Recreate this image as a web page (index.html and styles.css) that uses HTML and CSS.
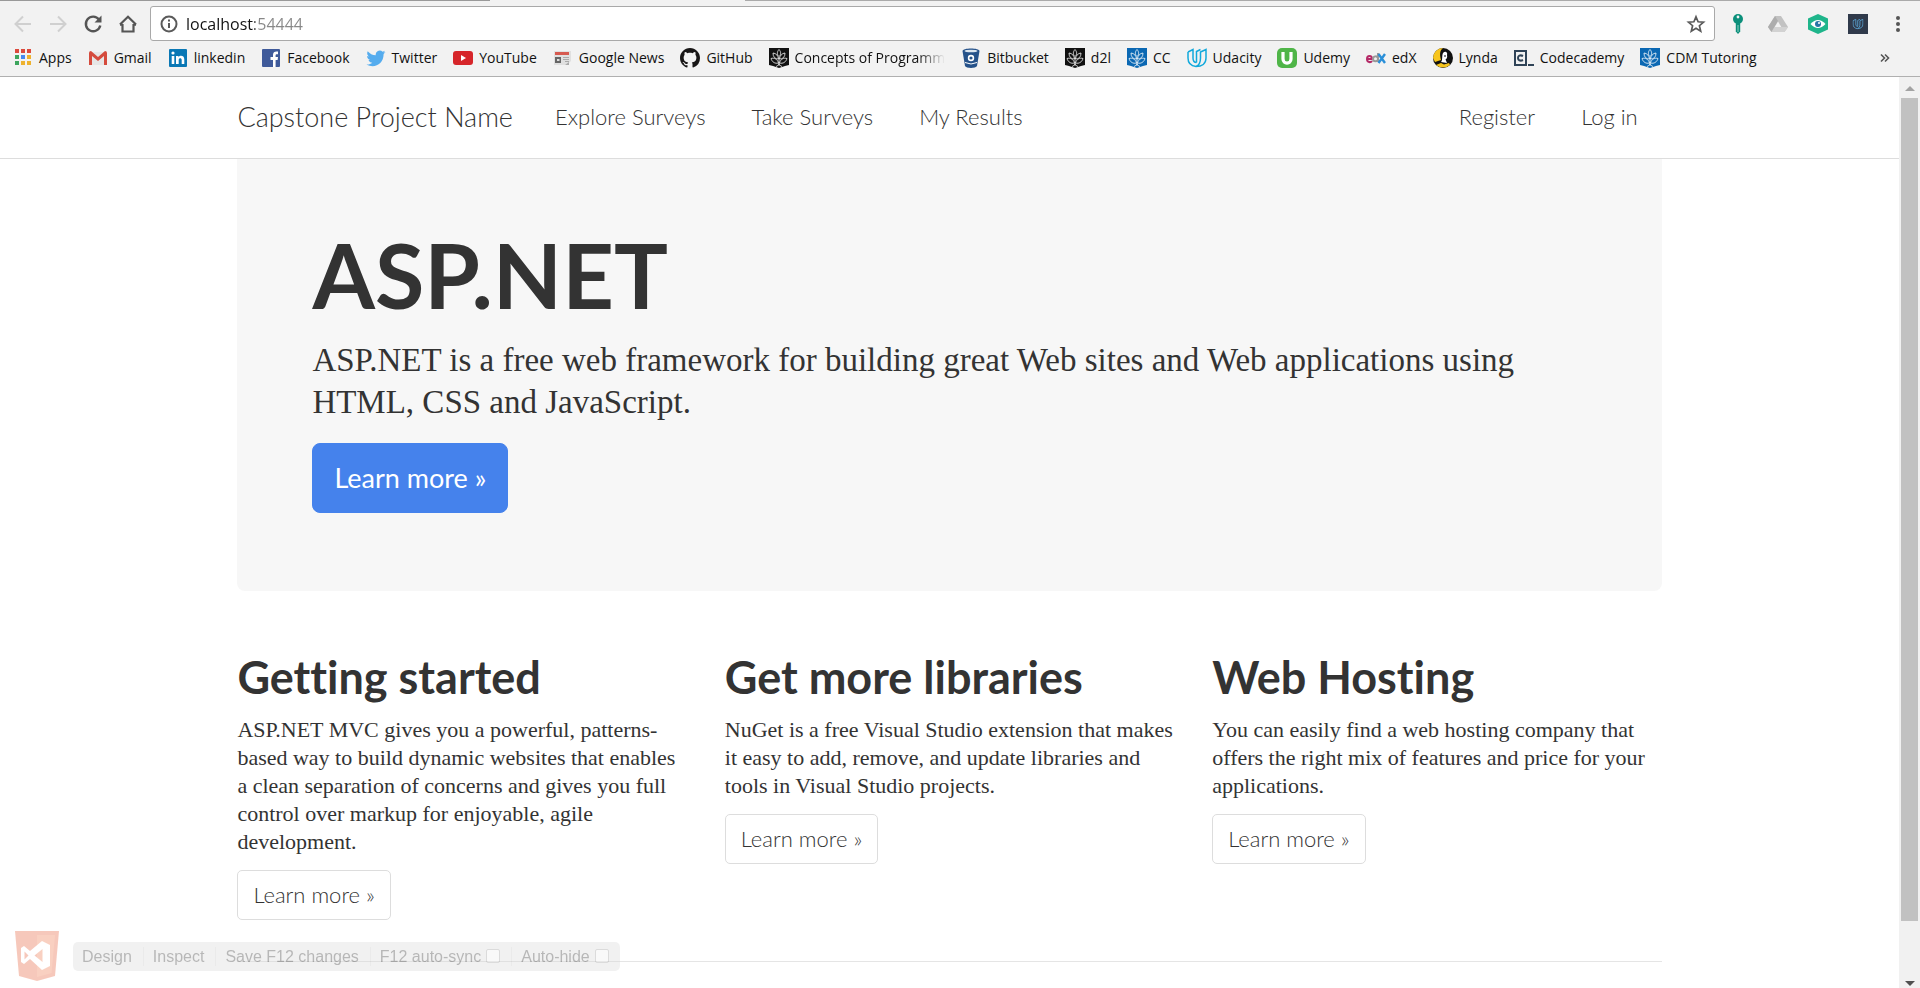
FILE: index.html
```html
<!DOCTYPE html>
<html lang="en">
<head>
<meta charset="utf-8">
<title>Home Page</title>
<link rel="stylesheet" href="styles.css">
</head>
<body>
<svg class="defs" aria-hidden="true">
  <symbol id="tree" viewBox="0 0 20 20">
    <path d="M0 0h20v17l-4 1-6 2-6-2-4-1z"/>
    <g fill="none" stroke="#fff" stroke-width=".9" stroke-opacity=".85" stroke-linejoin="round">
      <path d="M10 9v9M7 18.500c1.500-.5 2.500-1.500 3-3 .5 1.500 1.500 2.500 3 3"/>
      <path d="M10 1.500c-2.200 2.500-2.200 5 0 7 2.200-2 2.200-4.500 0-7zM9.500 11C6 11 4 9 4 5c3 .3 5.200 2.500 5.500 6zM10.500 11c3.500 0 5.500-2 5.500-6-3 .3-5.200 2.500-5.500 6zM9.500 15C6 16 3 14 2 10.500c3-1 6.500.5 7.500 4.500zM10.500 15c3.500 1 6.500-1 7.500-4.500-3-1-6.500.5-7.500 4.500z"/>
    </g>
  </symbol>
  <symbol id="udacity" viewBox="0 0 20 20">
    <path d="M1 4l5-2.500V10c0 3 1 4.500 3.500 4.500M1 4v6c0 5 3 8 8 8.500 6 0 10-3 10-8.500V1.500L13.500 4v6c0 4.500-1.500 7.500-4.500 8.500M9.500 14.500V3.500l4-2"/>
  </symbol>
</svg>
<header class="chrome">
  <div class="tabline"><i></i><b></b></div>
  <div class="toolbar">
    <button class="tool" aria-label="Back"><svg viewBox="0 0 20 20" fill="none" stroke="#d0d0d0" stroke-width="2"><path d="M18 10H3M10 2.500L2.500 10l7.500 7.500"/></svg></button>
    <button class="tool" aria-label="Forward"><svg viewBox="0 0 20 20" fill="none" stroke="#d0d0d0" stroke-width="2"><path d="M2 10h15M10 2.500l7.500 7.500-7.500 7.500"/></svg></button>
    <button class="tool" aria-label="Reload"><svg viewBox="0 0 20 20" fill="none" stroke="#555" stroke-width="2.400"><path d="M16 5.500A7.300 7.300 0 1 0 17.300 11.500"/><path d="M18.500 1.500v7h-7z" fill="#555" stroke="none"/></svg></button>
    <button class="tool" aria-label="Home"><svg viewBox="0 0 20 20" fill="none" stroke="#555" stroke-width="2.200"><path d="M4.500 10v7.500h11V10M2 10.700h2.500M18 10.700h-2.500M2 10.500l8-7.800 8 7.800"/></svg></button>
    <div class="address">
      <svg class="info" viewBox="0 0 20 20" fill="none" stroke="#5a5a5a" stroke-width="2"><circle cx="10" cy="10" r="7.500"/><path d="M10 9v5M10 5.500v2"/></svg>
      <input class="url" type="text" aria-label="Address" value="localhost:54444">
      <button class="star" aria-label="Bookmark this page"><svg viewBox="0 0 20 20" fill="none" stroke="#5a5a5a" stroke-width="1.700"><path d="M10 2.800l2.100 5 5.400.4-4.100 3.500 1.300 5.400-4.700-2.900-4.700 2.900 1.300-5.400-4.100-3.500 5.400-.4z"/></svg></button>
    </div>
    <div class="extensions">
      <button class="tool" aria-label="Password key"><svg viewBox="0 0 20 20"><circle cx="10" cy="5" r="5" fill="#0b8f7a"/><circle cx="10" cy="3" r="1.400" fill="#f2f2f2"/><path d="M7.800 9h4.400v8.500L10 20l-2.200-2.500z" fill="#0b8f7a"/><path d="M10 11v7" stroke="#8fd0c4"/></svg></button>
      <button class="tool" aria-label="Drive"><svg viewBox="0 0 20 20"><path d="M7 2h6l7 11-3.500 5h-13L0 13z" fill="#c2c2c2"/><path d="M7 2L0 13l3.500 5L10 7z" fill="#adadad"/><path d="M3.500 18l3-5H20l-3.500 5z" fill="#d2d2d2"/><path d="M10 7.500l3.300 5.500H6.700z" fill="#f2f2f2"/></svg></button>
      <button class="tool" aria-label="Privacy eye"><svg viewBox="0 0 20 20"><path d="M10 0l10 4.500v11L10 20 0 15.500v-11z" fill="#1fb58b"/><path d="M2.500 10q7.500-8 15 0-7.500 8-15 0z" fill="#fff"/><circle cx="10" cy="10" r="3" fill="#2874a6"/><circle cx="11" cy="9" r="1" fill="#fff"/></svg></button>
      <button class="tool" aria-label="Udacity"><svg viewBox="0 0 20 20"><path d="M0 0h20v20H0z" fill="#303a4b"/><use href="#udacity" x="4.500" y="4.500" width="11" height="11" fill="none" stroke="#5aa0cf" stroke-width="1.600"/></svg></button>
      <button class="tool" aria-label="Menu"><svg viewBox="0 0 20 20" fill="#555"><circle cx="10" cy="4" r="2"/><circle cx="10" cy="10" r="2"/><circle cx="10" cy="16" r="2"/></svg></button>
    </div>
  </div>
  <nav class="bookmarks" aria-label="Bookmarks">
    <a href="#"><svg viewBox="0 0 20 20"><path d="M2 1h4v4H2zM8 1h4v4H8zM14 1h4v4h-4z" fill="#dc4a3d"/><path d="M2 7h4v4H2zM2 13h4v4H2z" fill="#3da55d"/><path d="M8 7h4v4H8z" fill="#4688f1"/><path d="M14 7h4v4h-4zM8 13h4v4H8zM14 13h4v4h-4z" fill="#eeb22f"/></svg>Apps</a>
    <a href="#"><svg viewBox="0 0 20 20"><path d="M2 4h16v13H2z" fill="#e6e6e6"/><path d="M1 17V5q0-2 2-2l7 6 7-6q2 0 2 2v12h-3V8l-6 5-6-5v9z" fill="#d54b3d"/></svg>Gmail</a>
    <a href="#"><svg viewBox="0 0 20 20"><rect x="1" y="1" width="18" height="18" rx="1" fill="#0a78b5"/><g fill="#fff"><circle cx="5" cy="5" r="1.600"/><path d="M3.700 8h2.600v8H3.700zM8 8h2.500v1.200C12 7 16.300 7.300 16.300 11.500V16h-2.600v-4c0-2.500-3-2.500-3 0v4H8z"/></g></svg>linkedin</a>
    <a href="#"><svg viewBox="0 0 20 20"><rect x="1" y="1" width="18" height="18" rx="1" fill="#3f5a9a"/><path d="M12 19v-7H9.500V9H12V7c0-3 2-4 5-3.500v2.700c-2-.2-2.400.2-2.400 1.300V9H17l-.4 3h-2v7z" fill="#fff"/></svg>Facebook</a>
    <a href="#"><svg viewBox="0 0 20 20"><path d="M19.500 4l-2 .8 1.500-2-2.400.9a4 4 0 0 0-6.800 3.600C6.500 7.200 3.700 5.500 1.700 3.200c-1 2-.4 4 1.200 5.300L1.100 8c0 2 1.300 3.500 3.200 4H2.500c.6 1.600 2 2.700 3.800 2.800C4.500 16.200 2.500 16.800.5 16.500c8 4.500 17.300-.5 17.100-10.500z" fill="#55acee"/></svg>Twitter</a>
    <a href="#"><svg viewBox="0 0 20 20"><rect y="3" width="20" height="14" rx="3" fill="#d6252a"/><path d="M8 7l5 3-5 3z" fill="#fff"/></svg>YouTube</a>
    <a href="#"><svg viewBox="0 0 20 20"><path d="M1 3h17v10l-4 4H1z" fill="#e0e0e0"/><path d="M2 4h14v3H2z" fill="#d65a50"/><path d="M2 9h6v6H2z" fill="#666"/><path d="M4 11h2.500v2H4z" fill="#ddd"/><path d="M10 9h6v1h-6zM10 11h6v1h-6zM12 13h4v1h-4zM12 17l4-3v3z" fill="#aaa"/></svg>Google News</a>
    <a href="#"><svg viewBox="0 0 16 16"><path fill="#181616" d="M8 0C3.580 0 0 3.580 0 8c0 3.540 2.290 6.530 5.470 7.590.4.070.55-.17.55-.38 0-.19-.01-.82-.01-1.490-2.010.37-2.530-.49-2.690-.94-.09-.23-.48-.94-.82-1.130-.28-.15-.68-.52-.01-.53.63-.01 1.080.58 1.230.82.72 1.210 1.870.87 2.330.66.070-.52.28-.87.51-1.070-1.780-.2-3.640-.89-3.640-3.950 0-.87.31-1.590.82-2.150-.08-.2-.36-1.020.08-2.120 0 0 .67-.21 2.200.82.64-.18 1.320-.27 2-.27s1.360.09 2 .27c1.530-1.040 2.200-.82 2.200-.82.44 1.100.16 1.920.08 2.120.51.56.82 1.270.82 2.150 0 3.070-1.870 3.750-3.650 3.950.29.25.54.73.54 1.480 0 1.070-.01 1.930-.01 2.200 0 .21.15.46.55.38A8.010 8.010 0 0 0 16 8c0-4.420-3.580-8-8-8z"/></svg>GitHub</a>
    <a href="#"><svg fill="#111"><use href="#tree"/></svg><span class="fade">Concepts of Programm</span></a>
    <a href="#"><svg viewBox="0 0 20 20"><path d="M1.500 3c0-3.500 17-3.500 17 0L16 18c-1 2.500-11 2.500-12 0z" fill="#25528a"/><ellipse cx="10" cy="3" rx="6.500" ry="1.300" fill="#dbe5ef"/><circle cx="10" cy="10" r="2.400" fill="none" stroke="#fff" stroke-width="1.600"/><path d="M4 14.500q6 3 12 0" fill="none" stroke="#fff"/></svg>Bitbucket</a>
    <a href="#"><svg fill="#111"><use href="#tree"/></svg>d2l</a>
    <a href="#"><svg fill="#0b68b3"><use href="#tree"/></svg>CC</a>
    <a href="#"><svg fill="none" stroke="#12a9dc" stroke-width="1.500"><use href="#udacity"/></svg>Udacity</a>
    <a href="#"><svg viewBox="0 0 20 20"><rect width="20" height="20" rx="5" fill="#4fb548"/><path d="M6 4v7c0 5.500 8 5.500 8 0V4" fill="none" stroke="#fff" stroke-width="3.200"/></svg>Udemy</a>
    <a href="#"><svg viewBox="0 0 20 20" fill="none" stroke-width="2"><path d="M1 11h5c0-4-5-4-5 0s4 3.500 5 2" stroke="#b52a67"/><path d="M12 5v9M12 11c0-4-5-3-5 0s5 3 5 0" stroke="#999"/><path d="M12.500 6l6.500 9M19 6l-6.500 9" stroke="#2a8fd8" stroke-width="2.400"/></svg>edX</a>
    <a href="#"><svg viewBox="0 0 20 20"><circle cx="10" cy="10" r="10" fill="#111"/><path d="M0 10A10 10 0 0 1 10 0C6 3 7 8 8 12l-6 2z" fill="#f7c51d"/><path d="M10 5c2-2.500 5-1 4 2 .5 2 0 4-1.500 4.500l1.500 3.500-6-1c2-2 .5-6 2-9z" fill="#fff"/><path d="M12 7v2" stroke="#111" fill="none"/><path d="M3 17l5-2 3 1.500 5-1.500 1 2q-7 5-14 0z" fill="#f7c51d"/></svg>Lynda</a>
    <a href="#"><svg viewBox="0 0 20 20" fill="none" stroke="#2f4357"><path d="M1 3h11v14H1z" stroke-width="2"/><path d="M9 8c-3-1.500-5 0-5 2s2 3.500 5 2" stroke-width="2"/><path d="M14 17h6" stroke-width="2"/></svg>Codecademy</a>
    <a href="#"><svg fill="#0b68b3"><use href="#tree"/></svg>CDM Tutoring</a>
    <button class="more" aria-label="More bookmarks"><svg viewBox="0 0 10 10" fill="none" stroke="#555" stroke-width="1.600"><path d="M1 1.500L4.500 5 1 8.500M5 1.500L8.500 5 5 8.500"/></svg></button>
  </nav>
</header>
<div class="viewport">
  <div class="page">
    <div class="navbar">
      <nav class="container nav" aria-label="Main">
        <a class="brand" href="#">Capstone Project Name</a>
        <a href="#">Explore Surveys</a>
        <a href="#">Take Surveys</a>
        <a href="#">My Results</a>
        <a class="push" href="#">Register</a>
        <a href="#">Log in</a>
      </nav>
    </div>
    <main class="container">
      <section class="jumbotron">
        <h1>ASP.NET</h1>
        <p>ASP.NET is a free web framework for building great Web sites and Web applications using HTML, CSS and JavaScript.</p>
        <a class="btn primary" href="#">Learn more »</a>
      </section>
      <div class="columns">
        <section>
          <h2>Getting started</h2>
          <p>ASP.NET MVC gives you a powerful, patterns-based way to build dynamic websites that enables a clean separation of concerns and gives you full control over markup for enjoyable, agile development.</p>
          <a class="btn" href="#">Learn more »</a>
        </section>
        <section>
          <h2>Get more libraries</h2>
          <p>NuGet is a free Visual Studio extension that makes it easy to add, remove, and update libraries and tools in Visual Studio projects.</p>
          <a class="btn" href="#">Learn more »</a>
        </section>
        <section>
          <h2>Web Hosting</h2>
          <p>You can easily find a web hosting company that offers the right mix of features and price for your applications.</p>
          <a class="btn" href="#">Learn more »</a>
        </section>
      </div>
      <hr>
    </main>
    <div class="devtools">
      <svg class="shield" viewBox="0 0 44 50"><path d="M0 0h44l-4 45-18 5-18-5z" fill="#e8653f"/><path d="M22 4h18l-3.500 38L22 46z" fill="#f07c50"/><path d="M6 17l3-2 6 5 12-10 8 4v21l-8 4-12-11-6 5-3-2zM9.500 20.500v8l4-4zM27.500 18l-8 6.500 8 6.500z" fill="#fff" fill-rule="evenodd"/></svg>
      <div class="devbar">
        <button>Design</button>
        <button>Inspect</button>
        <button>Save F12 changes</button>
        <label>F12 auto-sync<input type="checkbox"></label>
        <label>Auto-hide<input type="checkbox"></label>
      </div>
    </div>
  </div>
  <div class="scrollbar" aria-hidden="true">
    <svg viewBox="0 0 10 5"><path d="M0 5l5-5 5 5z" fill="#a3a3a3"/></svg>
    <div class="track"><div class="thumb"></div></div>
    <svg viewBox="0 0 10 5"><path d="M0 0l5 5 5-5z" fill="#505050"/></svg>
  </div>
</div>
</body>
</html>
```

FILE: styles.css
```css
* { box-sizing: border-box; }
body {
  margin: 0;
  height: 100vh;
  display: flex;
  flex-direction: column;
  overflow: hidden;
  background: #fff;
  color: #333;
  font: 22px/28px "Liberation Serif", serif;
}
a { color: inherit; text-decoration: none; }
button { border: 0; padding: 0; background: none; font: inherit; color: inherit; }
svg { display: block; flex: none; }
.defs { position: absolute; width: 0; height: 0; }

/* Browser chrome */
.chrome {
  flex: none;
  height: 77px;
  background: #f2f2f2;
  border-bottom: 1px solid #b0b0b0;
  color: #111;
  font: 14px/20px "Open Sans", sans-serif;
}
.tabline { display: flex; justify-content: space-between; height: 6px; }
.tabline i { width: 490px; height: 1px; background: #999; }
.tabline b { width: calc(100% - 745px); height: 1px; background: #aaa; }
.toolbar { display: flex; align-items: center; height: 35px; padding: 0 12px 0 13px; }
.tool { width: 20px; height: 20px; margin-right: 15px; }
.tool svg, .star svg { width: 20px; height: 20px; }
.address {
  flex: 1;
  display: flex;
  align-items: center;
  height: 35px;
  margin: 0 13px 0 -3px;
  padding: 0 8px;
  background: #fff;
  border: 1px solid #a9a9a9;
  border-radius: 3px;
}
.info { width: 20px; height: 20px; }
.url {
  flex: 1;
  min-width: 0;
  border: 0;
  padding: 0 0 0 7px;
  font: 16px/24px "Open Sans", sans-serif;
  color: transparent;
  background: linear-gradient(90deg, #111 76px, #888 76px);
  background-clip: text;
}
.extensions { display: flex; gap: 20px; }
.extensions .tool { margin: 0; }
.bookmarks { display: flex; align-items: center; gap: 16px; height: 34px; padding: 0 30px 0 13px; white-space: nowrap; }
.bookmarks a { display: flex; align-items: center; gap: 6px; }
.bookmarks a svg { width: 20px; height: 20px; }
.fade { mask-image: linear-gradient(90deg, #000 82%, transparent); }
.more { margin-left: auto; }
.more svg { width: 10px; height: 10px; }

/* Page */
.viewport { flex: 1; min-height: 0; display: flex; }
.page { flex: 1; position: relative; overflow: hidden; }
.container { width: 75%; margin: 0 auto; }
.navbar { border-bottom: 1px solid #ddd; }
.nav {
  display: flex;
  align-items: center;
  gap: 46px;
  height: 81px;
  padding: 0 24px 2px 0;
  font: 300 22px/28px Lato, sans-serif;
  font-variant-ligatures: none;
}
.brand { font-size: 27px; margin-right: -4px; }
.push { margin-left: auto; }
.jumbotron {
  padding: 65px 75px 78px;
  background: #f7f7f7;
  border-radius: 0 0 8px 8px;
}
h1, h2 { margin: 0 0 15px; font-family: Lato, sans-serif; font-weight: 700; font-variant-ligatures: none; }
h1 { font-size: 90px; line-height: 100px; }
h2 { font-size: 45px; line-height: 48px; }
p { margin: 0 0 14px; }
.jumbotron p { margin-bottom: 20px; font-size: 33px; line-height: 42px; }
.btn {
  display: inline-block;
  padding: 10px 15px;
  border: 1px solid #ddd;
  border-radius: 5px;
  background: #fff;
  font: 300 22px/28px Lato, sans-serif;
}
.primary {
  padding: 20px 21px;
  border-color: #4582ec;
  border-radius: 8px;
  background: #4582ec;
  color: #fff;
  font-size: 27px;
  font-weight: 400;
}
.columns { display: grid; grid-template-columns: repeat(3, 1fr); gap: 38px; padding-top: 62px; align-items: start; }
.columns .btn, .primary { vertical-align: top; }
hr { margin: 41px 0; border: 0; border-top: 1px solid #e5e5e5; }

/* Visual Studio overlay */
.devtools {
  position: absolute;
  left: 15px;
  bottom: 7px;
  display: flex;
  align-items: center;
  gap: 14px;
  opacity: .35;
}
.shield { width: 44px; height: 50px; }
.devbar {
  display: flex;
  align-items: center;
  height: 29px;
  border-radius: 5px;
  background: #d8d8d8;
  font: 16px/19px "Liberation Sans", sans-serif;
}
.devbar > * { display: flex; align-items: center; padding: 0 11px 0 9px; border-right: 1px solid #c4c4c4; }
.devbar > :last-child { border: 0; }
.devbar input { appearance: none; width: 14px; height: 14px; margin: 0 0 0 5px; border: 1px solid #999; border-radius: 2px; background: #eee; }

/* Scrollbar */
.scrollbar {
  width: 21px;
  display: flex;
  flex-direction: column;
  align-items: center;
  padding: 9px 0 2px;
  background: #f1f1f1;
}
.scrollbar svg { width: 10px; height: 5px; }
.track { flex: 1; width: 17px; padding: 7px 0; }
.thumb { height: 94%; background: #c1c1c1; }
```
